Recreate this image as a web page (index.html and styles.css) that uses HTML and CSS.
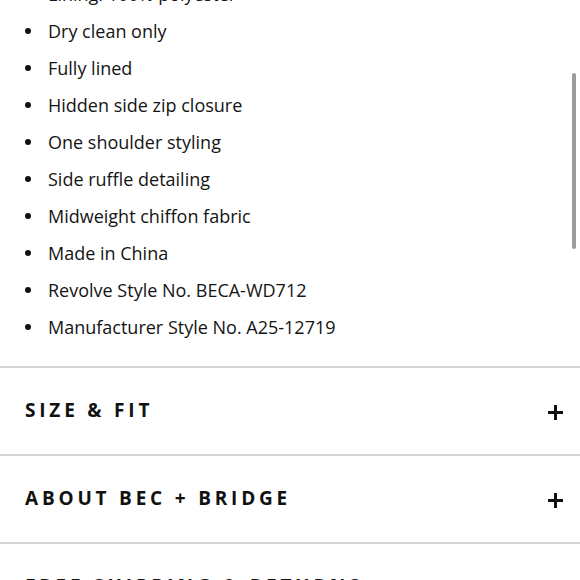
FILE: index.html
```html
<!DOCTYPE html>
<html lang="en">
<head>
    <meta charset="UTF-8">
    <meta name="viewport" content="width=device-width, initial-scale=1.0">
    <title>Product Details</title>
    <link rel="stylesheet" href="styles.css">
</head>
<body>
    <div class="details">
        <ul class="detail-list">
            <li>Lining: 100% polyester</li>
            <li>Dry clean only</li>
            <li>Fully lined</li>
            <li>Hidden side zip closure</li>
            <li>One shoulder styling</li>
            <li>Side ruffle detailing</li>
            <li>Midweight chiffon fabric</li>
            <li>Made in China</li>
            <li>Revolve Style No. BECA-WD712</li>
            <li>Manufacturer Style No. A25-12719</li>
        </ul>
    </div>

    <div class="accordion">
        <div class="accordion-item">
            <span class="accordion-title">Size &amp; Fit</span>
            <span class="plus"></span>
        </div>
        <div class="accordion-item">
            <span class="accordion-title">About Bec + Bridge</span>
            <span class="plus"></span>
        </div>
        <div class="accordion-item">
            <span class="accordion-title">Free Shipping &amp; Returns</span>
            <span class="plus"></span>
        </div>
    </div>

    <div class="scrollbar"></div>
</body>
</html>
```

FILE: styles.css
```css
body {
    font-family: "Open Sans", "DejaVu Sans", sans-serif;
    margin: 0;
    padding: 0;
    background-color: #fff;
    color: #141414;
    overflow: hidden;
}

.details {
    margin-top: -24px;
    padding-bottom: 20px;
}

.detail-list {
    list-style: none;
    margin: 0;
    padding: 0 0 0 48px;
}

.detail-list li {
    position: relative;
    font-size: 18px;
    line-height: 37px;
    white-space: nowrap;
}

.detail-list li::before {
    content: "";
    position: absolute;
    left: -23px;
    top: 15px;
    width: 6px;
    height: 6px;
    border-radius: 50%;
    background-color: #111;
}

.accordion-item {
    display: flex;
    justify-content: space-between;
    align-items: center;
    height: 86px;
    padding: 0 17px 0 25px;
    border-top: 2px solid #d6d6d6;
}

.accordion-title {
    font-size: 19px;
    font-weight: bold;
    text-transform: uppercase;
    letter-spacing: 3.8px;
    color: #111;
    margin-top: -3px;
}

.plus {
    position: relative;
    width: 15px;
    height: 15px;
    margin-top: 3px;
}

.plus::before,
.plus::after {
    content: "";
    position: absolute;
    background-color: #111;
}

.plus::before {
    left: 0;
    top: 6px;
    width: 15px;
    height: 3px;
}

.plus::after {
    left: 6px;
    top: 0;
    width: 3px;
    height: 15px;
}

.scrollbar {
    position: fixed;
    right: 4px;
    top: 73px;
    width: 4px;
    height: 176px;
    border-radius: 2px;
    background-color: #9c9c9c;
}
```
